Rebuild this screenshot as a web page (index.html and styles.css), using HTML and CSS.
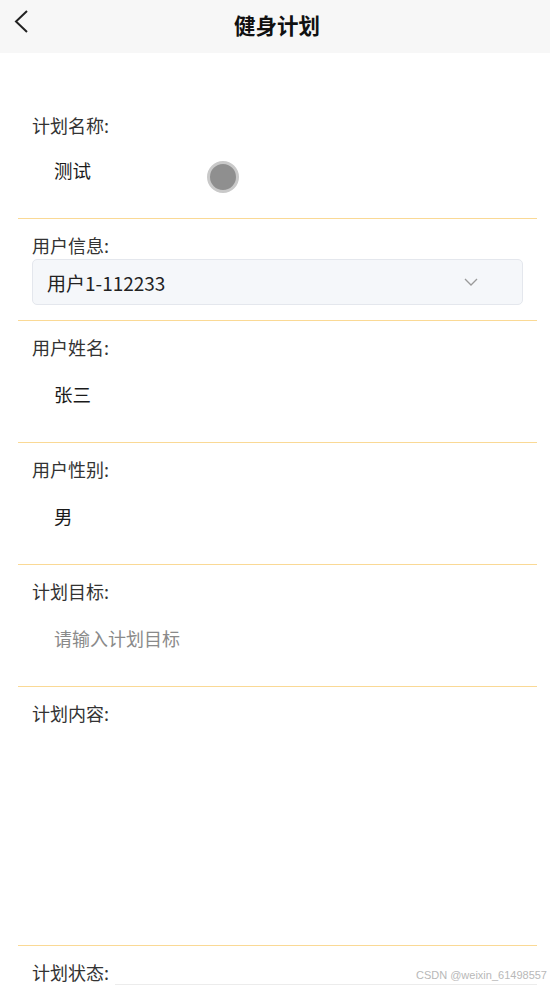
FILE: index.html
```html
<!DOCTYPE html>
<html lang="zh">
<head>
<meta charset="utf-8">
<title>健身计划</title>
<link rel="stylesheet" href="styles.css">
</head>
<body>
<div class="page">
  <header class="navbar">
    <svg class="back" width="20" height="28" viewBox="0 0 20 28"><polyline points="14,2 3,12.5 14,23" fill="none" stroke="#222" stroke-width="2"/></svg>
    <h1 class="title">健身计划</h1>
  </header>
  <main class="form">
    <section class="field first">
      <div class="label">计划名称:</div>
      <div class="value">测试</div>
      <span class="float-ball"></span>
    </section>
    <section class="field select-field">
      <div class="label">用户信息:</div>
      <div class="select">
        <span>用户1-112233</span>
        <svg width="14" height="8" viewBox="0 0 14 8"><polyline points="1,1 7,7 13,1" fill="none" stroke="#9a9a9a" stroke-width="1.3"/></svg>
      </div>
    </section>
    <section class="field">
      <div class="label">用户姓名:</div>
      <div class="value">张三</div>
    </section>
    <section class="field">
      <div class="label">用户性别:</div>
      <div class="value">男</div>
    </section>
    <section class="field">
      <div class="label">计划目标:</div>
      <div class="value placeholder">请输入计划目标</div>
    </section>
    <section class="field content-field">
      <div class="label">计划内容:</div>
      <div class="textarea"></div>
    </section>
    <section class="field last">
      <div class="label">计划状态:</div>
      <div class="status-box"></div>
    </section>
  </main>
  <div class="watermark">CSDN @weixin_61498557</div>
</div>
</body>
</html>
```
FILE: styles.css
```css
* { box-sizing: border-box; margin: 0; padding: 0; }
html, body { width: 550px; height: 986px; overflow: hidden; background: #fff; }
body { font-family: "Noto Sans CJK SC", "Noto Sans", sans-serif; color: #222; }
.page { position: relative; height: 986px; }
.navbar {
  height: 53px;
  background: #f7f7f7;
  display: flex;
  align-items: center;
  justify-content: center;
  position: relative;
}
.back { position: absolute; left: 13px; top: 9px; }
.title { font-size: 21.5px; font-weight: 700; color: #111; line-height: 28px; margin: 0 0 4px 4px; }
.form { padding: 0 13px 0 18px; }
.field {
  border-bottom: 1px solid #fad995;
  padding: 15px 0 28px 14px;
  position: relative;
}
.field.first { padding-top: 61px; }
.label { font-size: 18px; line-height: 22px; color: #333; }
.value {
  font-size: 18.5px;
  line-height: 40px;
  height: 40px;
  margin-top: 16px;
  padding-left: 22px;
  color: #1a1a1a;
}
.first .value { margin-top: 14px; }
.value.placeholder { color: #8a8a8a; font-size: 18px; }
.float-ball {
  position: absolute;
  left: 189px;
  top: 108px;
  width: 32px;
  height: 32px;
  border-radius: 50%;
  background: #8f8f8f;
  border: 3px solid #c9c9c9;
}
.select-field { padding-bottom: 15px; }
.select {
  margin-top: 3px;
  width: 491px;
  height: 46px;
  background: #f5f7fa;
  border: 1px solid #e4e7ed;
  border-radius: 5px;
  display: flex;
  align-items: center;
  justify-content: space-between;
  padding: 0 44px 0 14px;
  font-size: 19px;
  color: #222;
}
.content-field { padding-bottom: 0; border-bottom: 1px solid #fad995; }
.textarea { height: 221px; }
.last { border-bottom: none; padding-bottom: 0; }
.status-box {
  margin-top: 1px;
  margin-left: 83px;
  height: 40px;
  border-top: 1px solid #ececec;
}
.watermark {
  position: absolute;
  right: 3px;
  bottom: 5px;
  font-family: "Liberation Sans", sans-serif;
  font-size: 11px;
  color: #b8b8b8;
}
```
